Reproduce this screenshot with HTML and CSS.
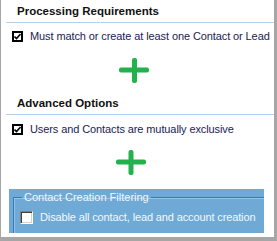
FILE: index.html
```html
<!DOCTYPE html>
<html lang="en">
<head>
    <meta charset="UTF-8">
    <title>Processing Options</title>
    <link rel="stylesheet" href="styles.css">
</head>
<body>
    <div class="panel">
        <div class="section-head">Processing Requirements</div>
        <div class="check-row first">
            <span class="check checked">
                <svg width="7" height="7" viewBox="0 0 7 7"><polyline points="0.5,3.5 2.5,5.5 6.5,1" fill="none" stroke="#000" stroke-width="1.6"/></svg>
            </span>
            <span class="check-label">Must match or create at least one Contact or Lead</span>
        </div>
        <div class="plus plus-one">
            <svg width="30" height="25" viewBox="0 0 30 25">
                <rect x="0" y="9.5" width="30" height="5" rx="2" fill="#22b14c"/>
                <rect x="13" y="0" width="5" height="25" rx="2" fill="#22b14c"/>
            </svg>
        </div>

        <div class="section-head second">Advanced Options</div>
        <div class="check-row second">
            <span class="check checked">
                <svg width="7" height="7" viewBox="0 0 7 7"><polyline points="0.5,3.5 2.5,5.5 6.5,1" fill="none" stroke="#000" stroke-width="1.6"/></svg>
            </span>
            <span class="check-label">Users and Contacts are mutually exclusive</span>
        </div>
        <div class="plus plus-two">
            <svg width="30" height="25" viewBox="0 0 30 25">
                <rect x="0" y="9.5" width="30" height="5" rx="2" fill="#22b14c"/>
                <rect x="12.5" y="0" width="5" height="25" rx="2" fill="#22b14c"/>
            </svg>
        </div>

        <div class="filter-box">
            <fieldset class="filter-group">
                <legend>Contact Creation Filtering</legend>
                <div class="filter-row">
                    <span class="check sunken"></span>
                    <span class="filter-label">Disable all contact, lead and account creation</span>
                </div>
            </fieldset>
        </div>
    </div>
</body>
</html>
```

FILE: styles.css
```css
* {
    margin: 0;
    padding: 0;
    box-sizing: border-box;
}

body {
    background: white;
    font-family: 'Liberation Sans', Arial, sans-serif;
    font-size: 11px;
}

.panel {
    width: 277px;
    height: 241px;
    background: white;
    border-left: 1px solid #a6a6a6;
    border-right: 3px solid #a6a6a6;
    border-bottom: 4px solid #a6a6a6;
    overflow: hidden;
}

.section-head {
    margin-left: 5px;
    padding: 4px 0 4px 11px;
    line-height: 14px;
    font-size: 11.5px;
    font-weight: bold;
    color: #111;
    border-bottom: 1px solid #b4d0ec;
}

.section-head.second {
    margin-top: 9px;
}

.check-row {
    display: flex;
    align-items: center;
    gap: 7px;
    padding-left: 11px;
    height: 11px;
}

.check-row.first {
    margin-top: 8px;
}

.check-row.second {
    margin-top: 9px;
}

.check {
    flex: none;
    display: flex;
    align-items: center;
    justify-content: center;
    background: white;
}

.check.checked {
    width: 11px;
    height: 11px;
    border: 2px solid #000;
}

.check-label {
    color: #1b1b55;
    line-height: 13px;
    letter-spacing: -0.1px;
    white-space: nowrap;
}

.plus svg {
    display: block;
}

.plus-one {
    margin: 16px 0 0 118px;
}

.plus-two {
    margin: 15px 0 0 115px;
}

.filter-box {
    margin: 14px 0 0 8px;
    width: 255px;
    height: 44px;
    background: #6eaad5;
    overflow: hidden;
}

.filter-group {
    margin: 2px 0 0 4px;
    width: 280px;
    height: 60px;
    padding: 0 0 0 6px;
    border: 1px solid #3a78b0;
    box-shadow: inset 1px 1px 0 #9ac4e4;
}

.filter-group legend {
    margin-left: 2px;
    padding: 0 2px;
    line-height: 13px;
    color: #f2f6fa;
}

.filter-row {
    display: flex;
    align-items: center;
    gap: 7px;
    margin-top: 7px;
}

.check.sunken {
    width: 13px;
    height: 13px;
    border: 1px solid;
    border-color: #808080 #ffffff #ffffff #808080;
    box-shadow: inset 1px 1px 0 #404040, inset -1px -1px 0 #d4d0c8;
}

.filter-label {
    color: #f4f7fb;
    line-height: 13px;
    letter-spacing: -0.13px;
    white-space: nowrap;
}
```
